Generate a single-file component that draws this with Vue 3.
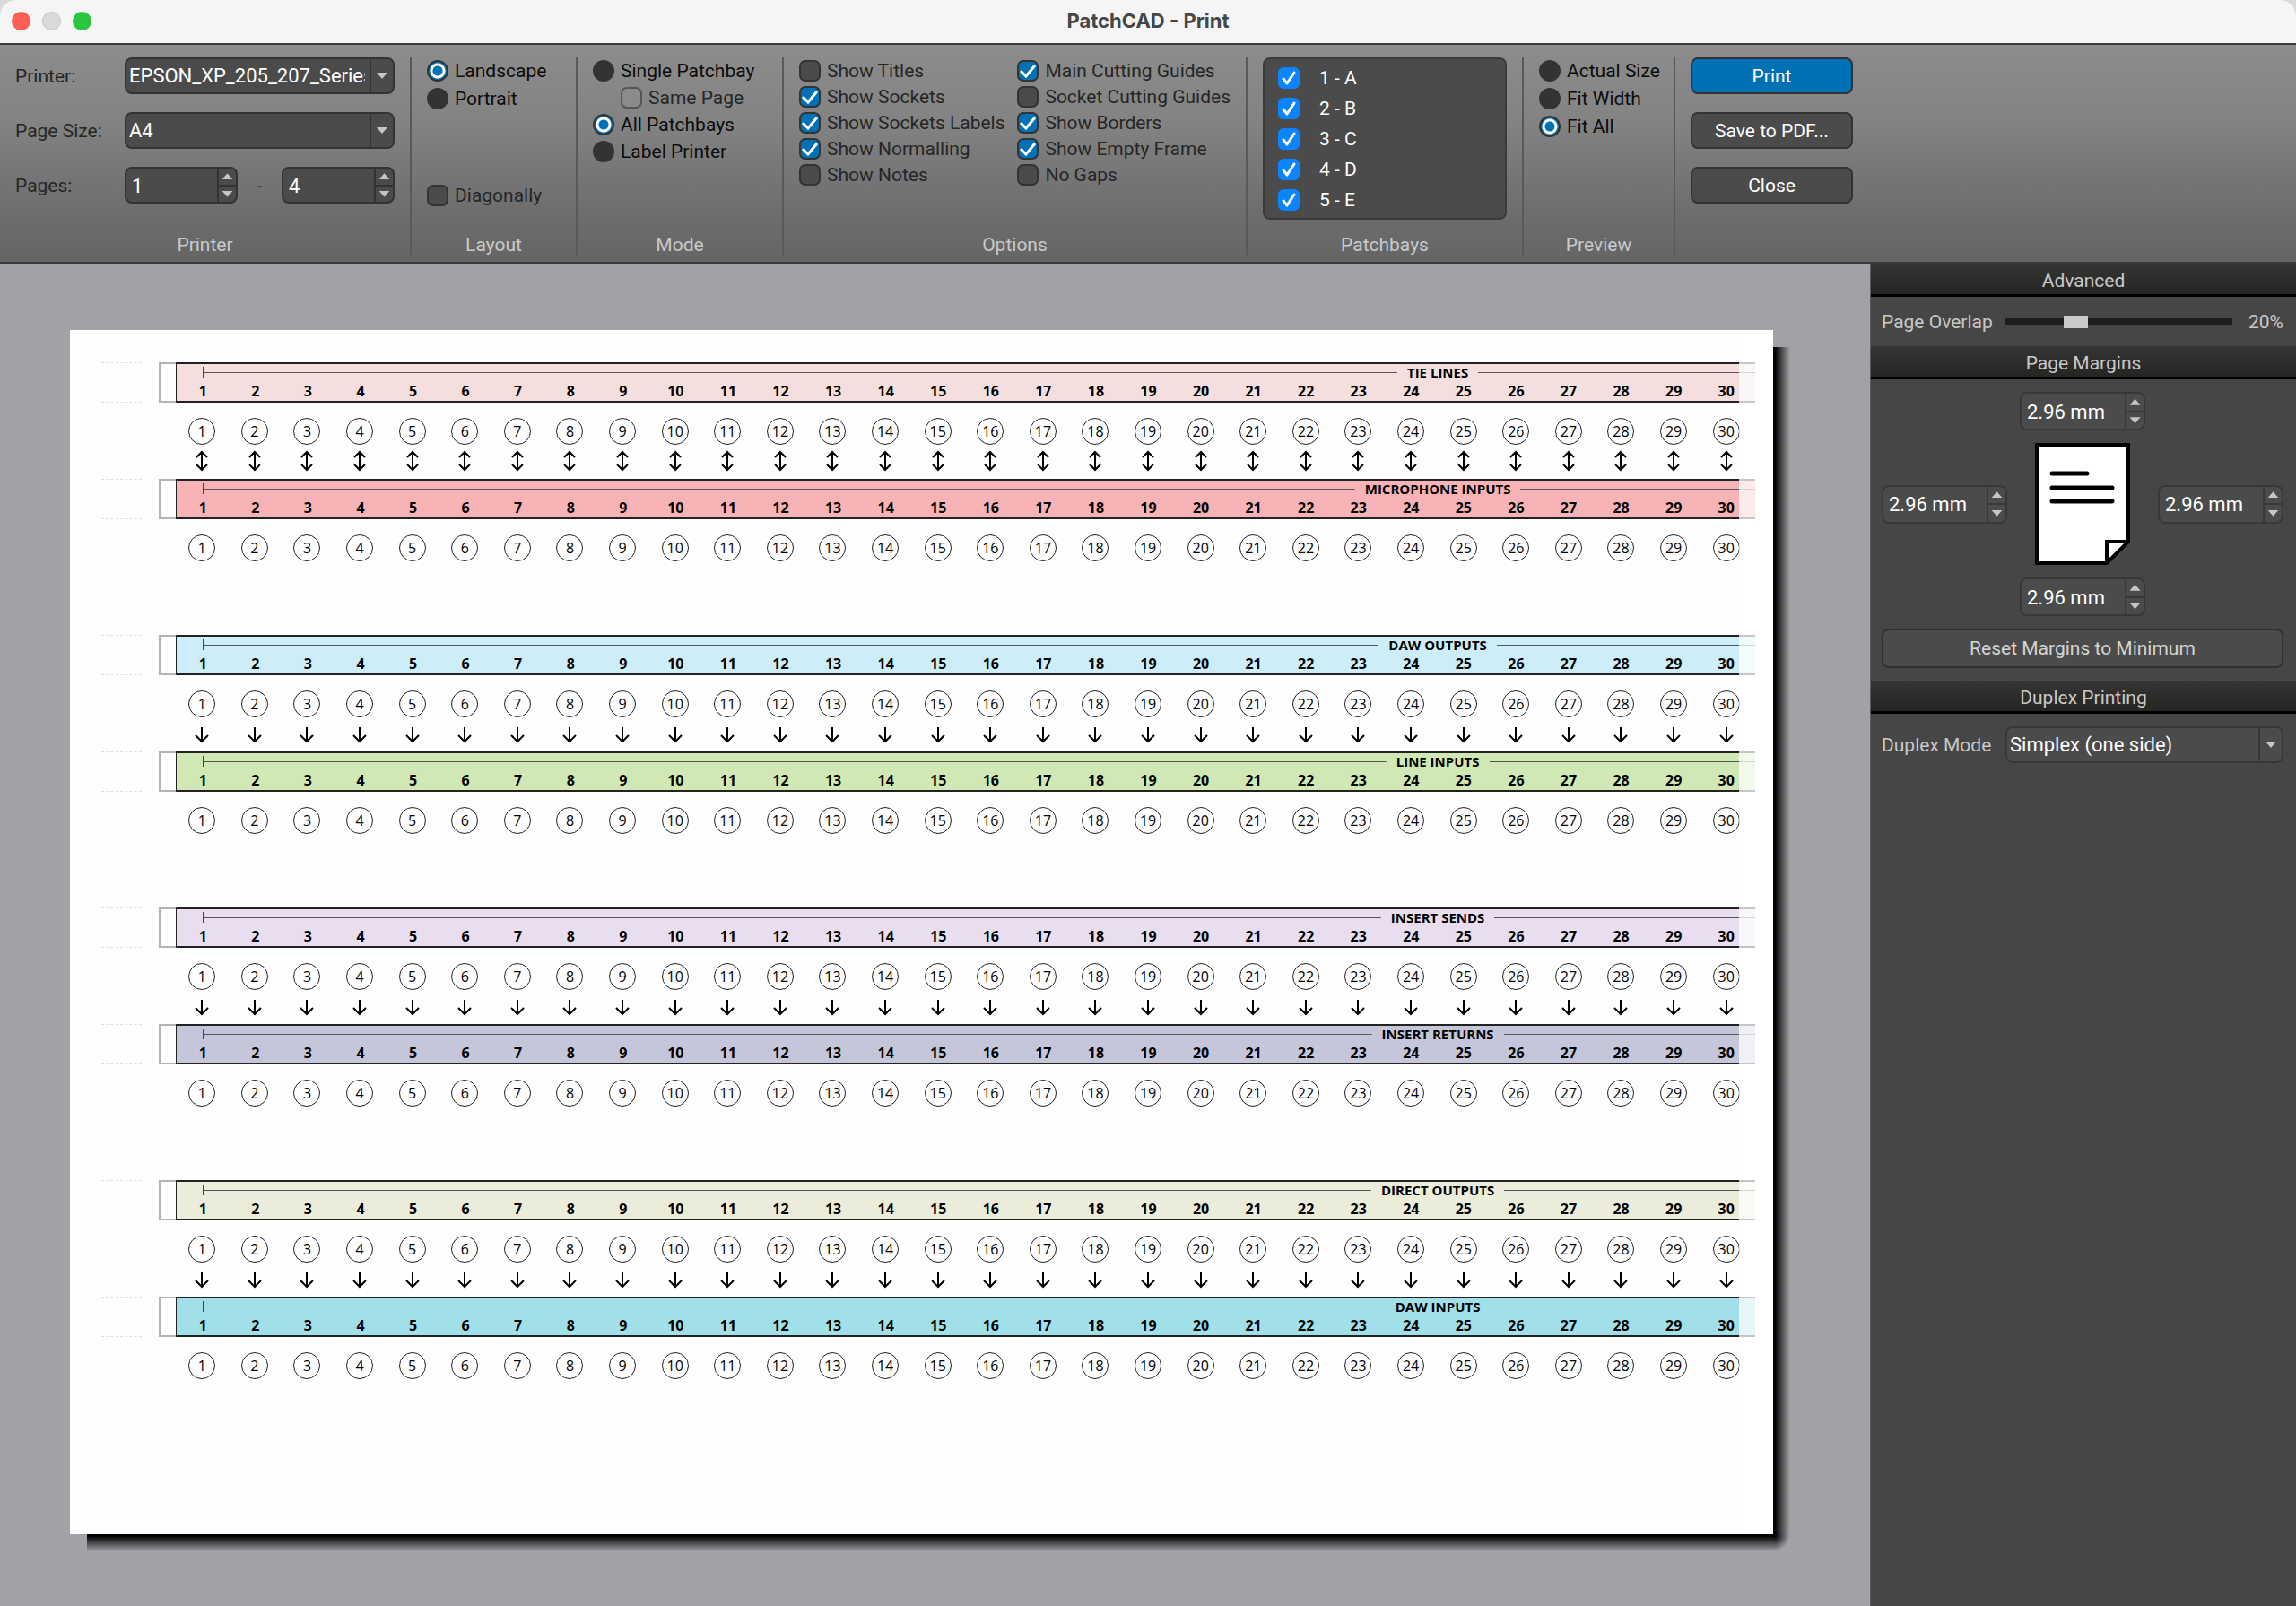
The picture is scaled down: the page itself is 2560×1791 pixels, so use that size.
<script setup>
import { reactive, ref } from 'vue'

const layout = ref('Landscape')
const mode = ref('All Patchbays')
const zoom = ref('Fit All')
const overlap = ref(20)
const diagonally = ref(false)
const samePage = ref(false)

const options = reactive([
  [
    { label: 'Show Titles', on: false },
    { label: 'Show Sockets', on: true },
    { label: 'Show Sockets Labels', on: true },
    { label: 'Show Normalling', on: true },
    { label: 'Show Notes', on: false },
  ],
  [
    { label: 'Main Cutting Guides', on: true },
    { label: 'Socket Cutting Guides', on: false },
    { label: 'Show Borders', on: true },
    { label: 'Show Empty Frame', on: true },
    { label: 'No Gaps', on: false },
  ],
])

const patchbays = reactive(
  ['1 - A', '2 - B', '3 - C', '4 - D', '5 - E'].map((label) => ({ label, on: true }))
)

const margins = reactive({ top: '2.96 mm', left: '2.96 mm', right: '2.96 mm', bottom: '2.96 mm' })
const pages = reactive({ from: '1', to: '4' })

const bays = [
  { arrow: 'both', rows: [{ title: 'TIE LINES', color: '#f4dfde' }, { title: 'MICROPHONE INPUTS', color: '#f7b3b5' }] },
  { arrow: 'down', rows: [{ title: 'DAW OUTPUTS', color: '#cdeef8' }, { title: 'LINE INPUTS', color: '#d0e8b4' }] },
  { arrow: 'down', rows: [{ title: 'INSERT SENDS', color: '#e8def0' }, { title: 'INSERT RETURNS', color: '#c5c6da' }] },
  { arrow: 'down', rows: [{ title: 'DIRECT OUTPUTS', color: '#ececdb' }, { title: 'DAW INPUTS', color: '#a1e0e8' }] },
]
</script>

<template>
  <div class="window">
    <header class="titlebar">
      <div class="lights">
        <button class="light red" aria-label="Close window"></button>
        <button class="light grey" aria-label="Minimise window"></button>
        <button class="light green" aria-label="Zoom window"></button>
      </div>
      <h1>PatchCAD - Print</h1>
    </header>

    <div class="toolbar">
      <section class="group g-printer">
        <div class="body stack">
          <div class="row">
            <label for="printer">Printer:</label>
            <div class="combo">
              <select id="printer"><option>EPSON_XP_205_207_Series</option></select>
              <span class="drop"><i class="tri down"></i></span>
            </div>
          </div>
          <div class="row">
            <label for="size">Page Size:</label>
            <div class="combo">
              <select id="size"><option>A4</option></select>
              <span class="drop"><i class="tri down"></i></span>
            </div>
          </div>
          <div class="row">
            <label for="from">Pages:</label>
            <div class="spin">
              <input id="from" v-model="pages.from" type="text" />
              <span class="steps">
                <button aria-label="First page up"><i class="tri up"></i></button>
                <button aria-label="First page down"><i class="tri down"></i></button>
              </span>
            </div>
            <span class="dash">-</span>
            <div class="spin">
              <input v-model="pages.to" type="text" aria-label="Last page" />
              <span class="steps">
                <button aria-label="Last page up"><i class="tri up"></i></button>
                <button aria-label="Last page down"><i class="tri down"></i></button>
              </span>
            </div>
          </div>
        </div>
        <h2>Printer</h2>
      </section>

      <section class="group g-layout">
        <div class="body radios">
          <label v-for="l in ['Landscape', 'Portrait']" :key="l" class="choice strong">
            <input v-model="layout" type="radio" name="layout" :value="l" />{{ l }}
          </label>
          <label class="choice last"><input v-model="diagonally" type="checkbox" />Diagonally</label>
        </div>
        <h2>Layout</h2>
      </section>

      <section class="group g-mode">
        <div class="body modes">
          <label class="choice strong"><input v-model="mode" type="radio" name="mode" value="Single Patchbay" />Single Patchbay</label>
          <label class="choice nested"><input v-model="samePage" type="checkbox" disabled />Same Page</label>
          <label class="choice strong"><input v-model="mode" type="radio" name="mode" value="All Patchbays" />All Patchbays</label>
          <label class="choice strong"><input v-model="mode" type="radio" name="mode" value="Label Printer" />Label Printer</label>
        </div>
        <h2>Mode</h2>
      </section>

      <section class="group g-options">
        <div class="body columns">
          <div v-for="(col, i) in options" :key="i" class="column">
            <label v-for="o in col" :key="o.label" class="choice">
              <input v-model="o.on" type="checkbox" />{{ o.label }}
            </label>
          </div>
        </div>
        <h2>Options</h2>
      </section>

      <section class="group g-bays">
        <div class="body">
          <div class="list">
            <label v-for="p in patchbays" :key="p.label">
              <input v-model="p.on" type="checkbox" />{{ p.label }}
            </label>
          </div>
        </div>
        <h2>Patchbays</h2>
      </section>

      <section class="group g-preview">
        <div class="body radios">
          <label v-for="z in ['Actual Size', 'Fit Width', 'Fit All']" :key="z" class="choice strong">
            <input v-model="zoom" type="radio" name="zoom" :value="z" />{{ z }}
          </label>
        </div>
        <h2>Preview</h2>
      </section>

      <div class="actions stack">
        <button class="btn primary">Print</button>
        <button class="btn">Save to PDF...</button>
        <button class="btn">Close</button>
      </div>
    </div>

    <div class="main">
      <main class="preview">
        <div class="paper">
          <div v-for="(bay, b) in bays" :key="b" class="bay">
            <template v-for="(row, r) in bay.rows" :key="row.title">
              <div class="strip">
                <div class="guides"></div>
                <div class="ear"></div>
                <div class="band" :style="{ backgroundColor: row.color }">
                  <div class="track">
                    <div class="heading"><span>{{ row.title }}</span></div>
                    <div class="cells numbers"><span v-for="n in 30" :key="n">{{ n }}</span></div>
                  </div>
                </div>
              </div>
              <div class="cells sockets"><span v-for="n in 30" :key="n"><b>{{ n }}</b></span></div>
              <div v-if="r === 0" class="cells arrows">
                <svg v-for="n in 30" :key="n" width="16" height="24" viewBox="0 0 16 24" aria-hidden="true">
                  <path v-if="bay.arrow === 'both'" d="M8 2V22M2 8L8 2L14 8M2 16L8 22L14 16" />
                  <path v-else d="M8 5V21M1 14L8 21L15 14" />
                </svg>
              </div>
            </template>
          </div>
        </div>
      </main>

      <aside class="side">
        <h2>Advanced</h2>
        <div class="line overlap">
          <label for="overlap">Page Overlap</label>
          <input id="overlap" v-model="overlap" type="range" min="0" max="70" />
          <output for="overlap">{{ overlap }}%</output>
        </div>

        <h2>Page Margins</h2>
        <div class="margins">
          <div v-for="(v, k) in margins" :key="k" class="spin" :class="k">
            <input v-model="margins[k]" type="text" :aria-label="k + ' margin'" />
            <span class="steps">
              <button :aria-label="k + ' margin up'"><i class="tri up"></i></button>
              <button :aria-label="k + ' margin down'"><i class="tri down"></i></button>
            </span>
          </div>
          <svg class="doc" width="106" height="136" viewBox="0 0 106 136" aria-hidden="true">
            <path d="M2 2H104V110L80 134H2Z" fill="#fff" stroke="#000" stroke-width="4" />
            <path d="M80 134V110H104" fill="none" stroke="#000" stroke-width="4" />
            <path d="M19 34H58M19 50H86M19 65H86" stroke="#000" stroke-width="5" stroke-linecap="round" />
          </svg>
          <button class="btn reset">Reset Margins to Minimum</button>
        </div>

        <h2>Duplex Printing</h2>
        <div class="line duplex">
          <label for="duplex">Duplex Mode</label>
          <div class="combo">
            <select id="duplex"><option>Simplex (one side)</option></select>
            <span class="drop"><i class="tri down"></i></span>
          </div>
        </div>
      </aside>
    </div>
  </div>
</template>

<style>
body {
  margin: 0;
  background: #d9d9db;
}
</style>

<style scoped>
* {
  box-sizing: border-box;
}
.window {
  min-height: 100vh;
  display: flex;
  flex-direction: column;
  overflow: hidden;
  border-radius: 18px 18px 0 0;
  font: 21px/26px Roboto, "Liberation Sans", sans-serif;
  color: #262626;
}
button,
input,
select {
  margin: 0;
  padding: 0;
  border: 0;
  font: inherit;
  color: inherit;
  background: none;
}
h1,
h2 {
  margin: 0;
  font-size: 21px;
  font-weight: 400;
  text-align: center;
}

/* Title bar */
.titlebar {
  display: grid;
  grid-template-columns: 1fr auto 1fr;
  align-items: center;
  height: 50px;
  padding: 0 13px 2px;
  background: #f5f5f5;
  border-bottom: 2px solid #3b3d3b;
}
.titlebar h1 {
  font: 700 22px/26px Inter, "Liberation Sans", sans-serif;
  color: #464646;
}
.lights {
  display: flex;
  gap: 13px;
}
.light {
  width: 21px;
  height: 21px;
  border-radius: 50%;
}
.red { background: #ff5f57; }
.grey { background: #dadada; border: 1px solid #c2c2c2; }
.green { background: #2ac641; }

/* Toolbar */
.toolbar {
  display: flex;
  padding: 14px 0 6px;
  border-bottom: 2px solid #3a3a3a;
  background: linear-gradient(#8c8c8c, #838383 35%, #757577 62%, #6c6c6c 80%, #656565);
}
.group {
  display: flex;
  flex-direction: column;
  height: 222px;
  padding: 0 17px;
  border-right: 2px solid #595959;
}
.group h2 {
  color: #c9c9c9;
}
.g-printer { width: 459px; }
.g-layout { width: 185px; }
.g-mode { width: 230px; }
.g-options { width: 517px; }
.g-bays { width: 308px; }
.g-preview { width: 169px; }
.body {
  flex: 1;
}
.stack {
  display: flex;
  flex-direction: column;
  gap: 20px;
}
.row {
  display: flex;
  align-items: center;
}
.row > label {
  width: 122px;
}
.row .combo {
  flex: 1;
}
.row .spin {
  width: 126px;
}
.dash {
  flex: 1;
  text-align: center;
}
.combo,
.spin {
  display: flex;
  height: 41px;
  overflow: hidden;
  border: 2px solid #333;
  border-radius: 8px;
  background: #4b4b4b;
  color: #fff;
  font-size: 22px;
}
.combo {
  position: relative;
}
.combo select {
  appearance: none;
  width: 100%;
  padding: 0 31px 0 3px;
  overflow: hidden;
}
.combo option {
  background: #4b4b4b;
}
.drop {
  position: absolute;
  inset: 0 0 0 auto;
  display: grid;
  place-items: center;
  width: 26px;
  border-left: 2px solid #333;
  background: #4b4b4b;
  pointer-events: none;
}
.spin input {
  flex: 1;
  min-width: 0;
  padding: 2px 0 0 6px;
}
.steps {
  display: flex;
  flex-direction: column;
  width: 21px;
  border-left: 2px solid #333;
}
.steps button {
  flex: 1;
  display: grid;
  place-items: center;
}
.steps button + button {
  border-top: 2px solid #333;
}
.tri {
  width: 12px;
  height: 7px;
  background: #c6c6c6;
}
.tri.up { clip-path: polygon(50% 0, 100% 100%, 0 100%); }
.tri.down { clip-path: polygon(0 0, 100% 0, 50% 100%); }

.radios,
.modes {
  display: flex;
  flex-direction: column;
  gap: 2px;
  padding-bottom: 28px;
}
.modes {
  gap: 1px;
}
.choice {
  display: flex;
  align-items: center;
  gap: 7px;
  height: 29px;
  white-space: nowrap;
}
.strong {
  color: #0c0c0c;
}
.last {
  margin-top: auto;
}
.nested {
  margin-left: 31px;
}
.choice input {
  appearance: none;
  flex: none;
  width: 24px;
  height: 24px;
  border: 2px solid #333;
}
.choice input[type='radio'] {
  border-radius: 50%;
  background: #333;
}
.choice input[type='radio']:checked {
  background: radial-gradient(circle, #0071b5 5px, #fff 6px 8px, #0071b5 9px);
}
.choice input[type='checkbox'] {
  border-radius: 7px;
  background: #4b4b4b;
}
.choice input[type='checkbox']:checked {
  background: #0071b5 url("data:image/svg+xml,%3Csvg xmlns='http://www.w3.org/2000/svg' viewBox='0 0 20 20'%3E%3Cpath d='M2 10L8 16L18 4' fill='none' stroke='white' stroke-width='3'/%3E%3C/svg%3E");
}
.choice input:disabled {
  border-color: #555;
  background: #8b8b8b;
}
.columns {
  display: flex;
}
.column:first-child {
  width: 245px;
}
.list {
  padding: 4px 0 3px 15px;
  border: 2px solid #3a3a3a;
  border-radius: 8px;
  background: #4b4b4b;
  color: #fff;
}
.list label {
  display: flex;
  align-items: center;
  gap: 22px;
  height: 34px;
}
.list input {
  appearance: none;
  width: 24px;
  height: 24px;
  border-radius: 6px;
  background: #4b4b4b;
}
.list input:checked {
  background: #0a84ff url("data:image/svg+xml,%3Csvg xmlns='http://www.w3.org/2000/svg' viewBox='0 0 24 24'%3E%3Cpath d='M6 13L10 18L18 6' fill='none' stroke='white' stroke-width='3' stroke-linecap='round' stroke-linejoin='round'/%3E%3C/svg%3E");
}
.actions {
  width: 198px;
  padding-left: 17px;
}
.btn {
  height: 41px;
  border: 2px solid #333;
  border-radius: 8px;
  background: #4b4b4b;
  color: #fff;
}
.primary {
  background: #0071b5;
}

/* Preview */
.main {
  flex: 1;
  display: flex;
}
.preview {
  flex: 1;
  min-width: 0;
  padding: 74px 108px 74px 78px;
  background: #a2a1a6;
}
.paper {
  position: relative;
  aspect-ratio: 297 / 210;
  padding-top: 36px;
  background: #fefefe;
  font: 15px/20px "Open Sans", "Noto Sans", sans-serif;
  color: #000;
}
/* Drop shadow: hard near edges, soft outer edges */
.paper::before {
  content: '';
  position: absolute;
  inset: 19px -19px -19px 19px;
  background:
    radial-gradient(circle at 0 0, #000 10%, transparent 70%) right bottom / 19px 19px no-repeat,
    linear-gradient(to right, #000 10%, transparent) right top / 19px calc(100% - 19px) no-repeat,
    linear-gradient(#000 10%, transparent) left bottom / calc(100% - 19px) 19px no-repeat;
}
/* Unprintable edge of the sheet */
.paper::after {
  content: '';
  position: absolute;
  inset: 0 0 0 auto;
  width: 38px;
  background: rgba(255, 255, 255, 0.74);
}
.bay {
  height: 304px;
}
.strip {
  display: flex;
  height: 45px;
  padding: 0 20px 0 35px;
}
.guides {
  width: 45px;
  margin-right: 19px;
  border: dashed #dedede;
  border-width: 1px 0;
}
.ear {
  width: 19px;
  border: 2px solid #b4b4b4;
  border-right: 0;
}
.band {
  flex: 1;
  min-width: 0;
  overflow: hidden;
  border: solid #222;
  border-width: 2px 0 2px 1px;
}
.track {
  margin-right: 3px;
}
.heading {
  display: flex;
  align-items: center;
  width: calc(100% * 47 / 30);
  height: 18px;
  margin-left: calc(100% / 60);
  font-weight: 700;
}
.heading::before,
.heading::after {
  content: '';
  flex: 1;
  height: 12px;
  background: linear-gradient(#555, #555) center / 100% 1px no-repeat;
}
.heading::before {
  border-left: 1px solid #444;
}
.heading span {
  padding: 0 11px;
}
.cells {
  display: grid;
  grid-template-columns: repeat(30, 1fr);
  justify-items: center;
}
.numbers {
  font-size: 16px;
  font-weight: 700;
  line-height: 24px;
}
.sockets,
.arrows {
  padding: 0 23px 0 118px;
}
.sockets {
  padding-top: 17px;
  font-size: 16px;
}
.sockets b {
  display: block;
  width: 30px;
  border: 1px solid #222;
  border-radius: 50%;
  font-weight: 400;
  line-height: 28px;
  text-align: center;
}
.arrows {
  padding-top: 6px;
  padding-bottom: 8px;
}
.arrows path {
  fill: none;
  stroke: #000;
  stroke-width: 2;
}

/* Side panel */
.side {
  width: 475px;
  border-left: 1px solid #5a5a5c;
  background: #464646;
  color: #c8c8c8;
}
.side h2 {
  height: 37px;
  padding-top: 6px;
  border-bottom: 3px solid #000;
  background: linear-gradient(#353535, #252523);
}
.side .combo,
.side .spin,
.side .steps,
.side .steps button,
.side .drop {
  border-color: #383838;
}
.line {
  display: flex;
  align-items: center;
  padding: 0 14px 0 12px;
}
.line label {
  width: 138px;
}
.overlap {
  height: 55px;
}
.overlap input {
  appearance: none;
  flex: 1;
  min-width: 0;
  height: 14px;
  background: linear-gradient(#1d1d1d, #1d1d1d) center / 100% 7px no-repeat;
}
.overlap input::-webkit-slider-thumb {
  appearance: none;
  width: 27px;
  height: 14px;
  background: #c9c9c9;
}
.overlap output {
  width: 57px;
  text-align: right;
}
.margins {
  display: grid;
  grid-template-columns: 140px 1fr 140px;
  grid-template-areas: '. top .' 'left doc right' '. bottom .' 'reset reset reset';
  gap: 14px 0;
  align-items: center;
  justify-items: center;
  padding: 14px 14px 14px 12px;
}
.margins .spin {
  width: 140px;
  height: 43px;
}
.top { grid-area: top; }
.left { grid-area: left; }
.right { grid-area: right; }
.bottom { grid-area: bottom; }
.doc { grid-area: doc; }
.reset {
  grid-area: reset;
  width: 100%;
  height: 44px;
  border-color: #303030;
  color: #d4d4d4;
}
.duplex {
  padding-top: 14px;
}
.duplex .combo {
  flex: 1;
}
</style>
